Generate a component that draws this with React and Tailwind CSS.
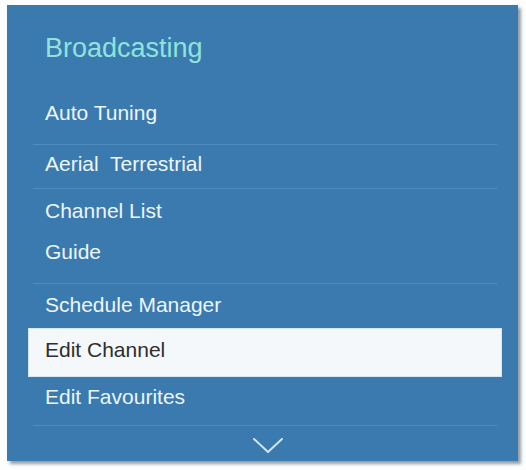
const items = [
  { label: 'Auto Tuning', pt: 'pt-[38px]', pb: 'pb-[19px]', line: true },
  { label: 'Aerial  Terrestrial', pt: 'pt-[7px]', pb: 'pb-[12px]', line: true },
  { label: 'Channel List', pt: 'pt-[10px]', pb: 'pb-0', line: false },
  { label: 'Guide', pt: 'pt-[17px]', pb: 'pb-[19px]', line: true },
  { label: 'Schedule Manager', pt: 'pt-[9px]', pb: 'pb-[11px]', line: false },
  { label: 'Edit Channel', selected: true },
  { label: 'Edit Favourites', pt: 'pt-[8px]', pb: 'pb-[16px]', line: true },
];

const MenuRow = ({ item }) => {
  if (item.selected) {
    return (
      <div className="h-[49px] bg-[#f4f8fb] border border-[#d6e7f3] pl-[16px] pt-[9px]">
        <span className="block text-[21px] leading-[24px] text-[#2e2e2e] whitespace-pre">
          {item.label}
        </span>
      </div>
    );
  }

  return (
    <div
      className={`mx-[5px] pl-[12px] ${item.pt} ${item.pb} ${
        item.line ? 'border-b border-[#4f8dbe]' : ''
      }`}
    >
      <span className="block text-[21px] leading-[24px] text-[#eef6fb] whitespace-pre">
        {item.label}
      </span>
    </div>
  );
};

export default function App() {
  return (
    <div
      className="w-[526px] h-[470px] bg-[#fcfefe] pt-[5px] pl-[7px]"
      style={{ fontFamily: '"Liberation Sans", Arial, sans-serif' }}
    >
      <div className="w-[511px] h-[456px] bg-[#3a7aaf] shadow-[3px_3px_3px_rgba(20,40,60,0.45)] pt-[28px]">
        <h1 className="pl-[38px] text-[27px] leading-[30px] text-[#8fe3da]">
          Broadcasting
        </h1>

        <div className="ml-[21px] mr-[16px]">
          {items.map((item) => (
            <MenuRow key={item.label} item={item} />
          ))}
        </div>

        <div className="flex justify-center pl-[10px] pt-[12px]">
          <svg width="30" height="16" viewBox="0 0 30 16" fill="none">
            <polyline
              points="1,1 15,14 29,1"
              stroke="#cfe6f5"
              strokeWidth="2"
              strokeLinecap="round"
              strokeLinejoin="round"
            />
          </svg>
        </div>
      </div>
    </div>
  );
}
